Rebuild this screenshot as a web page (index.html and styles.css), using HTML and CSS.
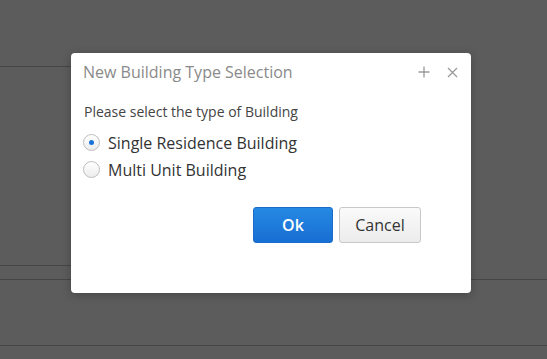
FILE: index.html
```html
<!DOCTYPE html>
<html>
<head>
<meta charset="utf-8">
<link rel="stylesheet" href="styles.css">
</head>
<body>
<div class="backdrop">
  <div class="row r1"></div>
  <div class="row r2"></div>
  <div class="row r3"></div>
  <div class="row r4"></div>
</div>
<div class="dialog">
  <div class="dlg-head">
    <span class="dlg-title">New Building Type Selection</span>
    <span class="dlg-tools">
      <svg width="12" height="12" viewBox="0 0 12 12"><path d="M6 0.5V11.5M0.5 6H11.5" stroke="#9a9a9a" stroke-width="1.3" fill="none"/></svg>
      <svg width="11" height="11" viewBox="0 0 11 11"><path d="M1 1L10 10M10 1L1 10" stroke="#9a9a9a" stroke-width="1.3" fill="none"/></svg>
    </span>
  </div>
  <div class="dlg-body">
    <p class="prompt">Please select the type of Building</p>
    <label class="opt"><span class="radio checked"></span>Single Residence Building</label>
    <label class="opt"><span class="radio"></span>Multi Unit Building</label>
    <div class="actions">
      <button class="btn primary">Ok</button>
      <button class="btn">Cancel</button>
    </div>
  </div>
</div>
</body>
</html>
```
FILE: styles.css
```css
html, body { margin: 0; padding: 0; }
body {
  width: 547px; height: 359px; overflow: hidden;
  background: #5c5c5c;
  font-family: "Open Sans", "DejaVu Sans", sans-serif;
  position: relative;
}
.backdrop { display: flex; flex-direction: column; }
.row { border-bottom: 1px solid #464646; }
.r1 { height: 66px; width: 71px; }
.r2 { height: 198px; width: 71px; }
.r3 { height: 13px; }
.r4 { height: 65px; }
.dialog {
  position: absolute; left: 71px; top: 53px;
  width: 400px; height: 240px;
  background: #fff; border-radius: 4px;
  box-shadow: 0 2px 10px rgba(0,0,0,0.25);
}
.dlg-head {
  display: flex; align-items: center; justify-content: space-between;
  height: 38px; padding: 0 13px 0 12px;
}
.dlg-title { color: #8a8a8a; font-size: 16px; }
.dlg-tools { display: flex; align-items: center; gap: 17px; }
.dlg-body { padding: 12px 13px 0 12px; }
.prompt { margin: 0 0 8px 1px; font-size: 14px; color: #444; line-height: 18px; }
.opt {
  display: flex; align-items: center; height: 27px;
  font-size: 16px; color: #333;
}
.radio {
  width: 17px; height: 17px; border-radius: 50%;
  border: 1px solid #bdbdbd; background: linear-gradient(#fff, #ececec);
  margin-right: 8px; position: relative; box-sizing: border-box;
}
.radio.checked::after {
  content: ""; position: absolute; left: 5px; top: 5px;
  width: 5px; height: 5px; border-radius: 50%; background: #1a73d9;
}
.actions { display: flex; justify-content: flex-end; gap: 6px; margin-top: 24px; padding-right: 37px; }
.btn {
  height: 36px; box-sizing: border-box; border-radius: 3px;
  font-family: inherit; font-size: 16px; color: #333;
  border: 1px solid #c8c8c8; background: linear-gradient(#fafafa, #ececec);
  width: 82px; padding: 0;
}
.btn.primary {
  width: 80px; border: 1px solid #1a6cc9;
  background: linear-gradient(#2689e3, #176ed3);
  color: #fff; font-weight: 600;
}
```
